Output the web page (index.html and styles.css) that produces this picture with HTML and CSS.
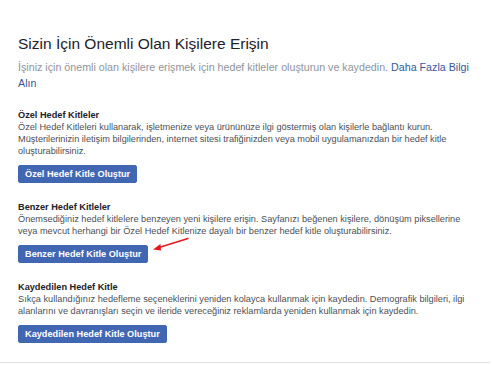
FILE: index.html
```html
<!DOCTYPE html>
<html lang="tr">
<head>
<meta charset="utf-8">
<link rel="stylesheet" href="styles.css">
</head>
<body>
<div class="page">
  <h1 class="title">Sizin İçin Önemli Olan Kişilere Erişin</h1>
  <p class="intro">İşiniz için önemli olan kişilere erişmek için hedef kitleler oluşturun ve kaydedin. <a class="link" href="#">Daha Fazla Bilgi Alın</a></p>

  <section class="block">
    <h2 class="heading">Özel Hedef Kitleler</h2>
    <p class="desc">Özel Hedef Kitleleri kullanarak, işletmenize veya ürününüze ilgi göstermiş olan kişilerle bağlantı kurun. Müşterilerinizin iletişim bilgilerinden, internet sitesi trafiğinizden veya mobil uygulamanızdan bir hedef kitle oluşturabilirsiniz.</p>
    <button class="btn">Özel Hedef Kitle Oluştur</button>
  </section>

  <section class="block">
    <h2 class="heading">Benzer Hedef Kitleler</h2>
    <p class="desc">Önemsediğiniz hedef kitlelere benzeyen yeni kişilere erişin. Sayfanızı beğenen kişilere, dönüşüm piksellerine veya mevcut herhangi bir Özel Hedef Kitlenize dayalı bir benzer hedef kitle oluşturabilirsiniz.</p>
    <div class="btn-row">
      <button class="btn">Benzer Hedef Kitle Oluştur</button>
      <svg class="arrow" width="40" height="16" viewBox="0 0 40 16">
        <line x1="37" y1="1.5" x2="8" y2="10.5" stroke="#e8161b" stroke-width="1.5" stroke-linecap="round"/>
        <path d="M2 12.5 L9.5 7 L10 13.5 Z" fill="#e8161b"/>
      </svg>
    </div>
  </section>

  <section class="block">
    <h2 class="heading">Kaydedilen Hedef Kitle</h2>
    <p class="desc">Sıkça kullandığınız hedefleme seçeneklerini yeniden kolayca kullanmak için kaydedin. Demografik bilgileri, ilgi alanlarını ve davranışları seçin ve ileride vereceğiniz reklamlarda yeniden kullanmak için kaydedin.</p>
    <button class="btn">Kaydedilen Hedef Kitle Oluştur</button>
  </section>
</div>
<div class="rule"></div>
</body>
</html>
```
FILE: styles.css
```css
html, body {
  margin: 0;
  padding: 0;
  background: #ffffff;
}
body {
  font-family: "Liberation Sans", Arial, sans-serif;
  width: 494px;
  height: 365px;
  overflow: hidden;
  position: relative;
}
.page {
  padding: 35px 18px 0 18px;
  width: 458px;
}
.title {
  margin: 0;
  font-size: 15.5px;
  font-weight: normal;
  color: #1d2129;
  line-height: 18px;
}
.intro {
  margin: 6px 0 0 0;
  font-size: 10.7px;
  line-height: 16px;
  color: #90949c;
}
.link {
  color: #365899;
  text-decoration: none;
}
.block {
  margin-top: 18px;
}
.block + .block {
  margin-top: 18px;
}
.heading {
  margin: 0;
  font-size: 9.2px;
  font-weight: bold;
  color: #1d2129;
  line-height: 12px;
}
.desc {
  margin: 0;
  font-size: 9.2px;
  line-height: 12px;
  color: #4b4f56;
}
.btn-row {
  display: flex;
  align-items: flex-start;
  position: relative;
}
.btn {
  display: block;
  margin-top: 8px;
  height: 18px;
  padding: 0 6px;
  background: #4267b2;
  border: 1px solid #4267b2;
  border-radius: 2px;
  color: #ffffff;
  font-family: "Liberation Sans", Arial, sans-serif;
  font-size: 9.2px;
  font-weight: bold;
  line-height: 16px;
}
.arrow {
  position: absolute;
  left: 133px;
  top: 0;
}
.rule {
  position: absolute;
  left: 0;
  right: 4px;
  top: 362px;
  height: 1px;
  background: #dddfe2;
}
```
